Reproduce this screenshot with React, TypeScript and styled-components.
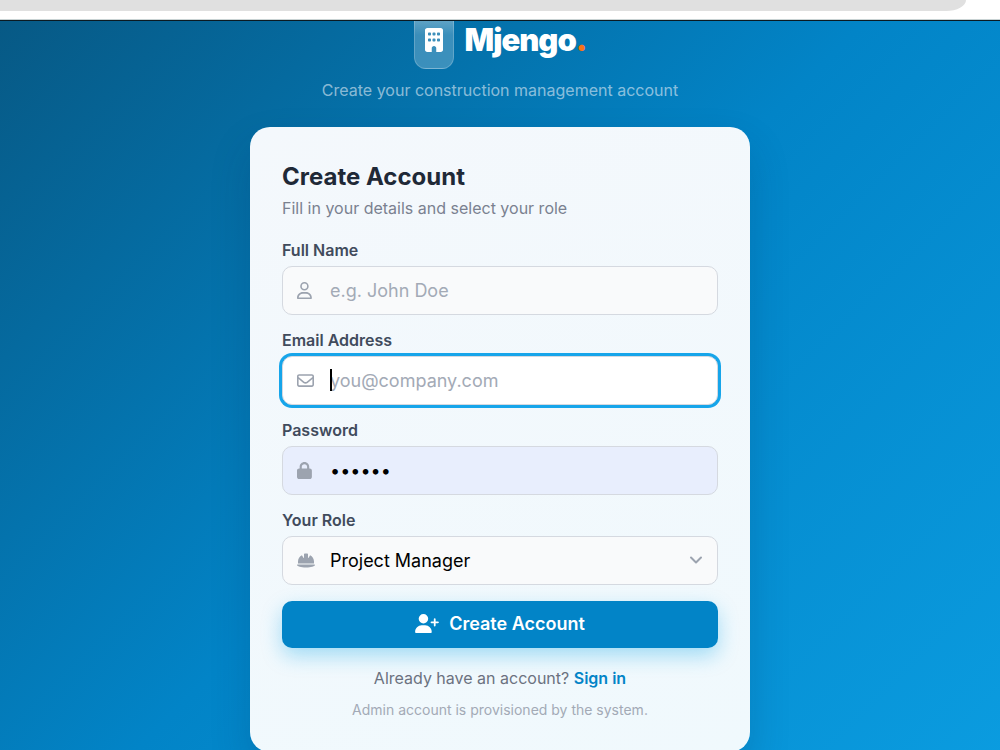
import React from "react";
import styled, { createGlobalStyle, css } from "styled-components";
import {
  FaBuilding,
  FaRegUser,
  FaRegEnvelope,
  FaLock,
  FaHelmetSafety,
  FaUserPlus,
} from "react-icons/fa6";

const GlobalStyle = createGlobalStyle`
  *, *::before, *::after { box-sizing: border-box; }
  body { margin: 0; font-family: Inter, "Liberation Sans", sans-serif; }
  h1, h2, p { margin: 0; }
`;

const Shell = styled.div`
  display: flex;
  flex-direction: column;
  height: 100vh;
  background: #ffffff;
`;

const BrowserBar = styled.div`
  flex: none;
  height: 21px;
  padding-right: 34px;
  border-bottom: 1px solid #0b1a22;
  box-shadow: inset 0 -1px 0 #c9d3d4;
`;

const AddressBar = styled.div`
  height: 11px;
  background: #e0e0e0;
  border-bottom-right-radius: 20px 11px;
`;

const Page = styled.main`
  flex: 1;
  min-height: 0;
  overflow: hidden auto;
  scrollbar-width: none;
  display: flex;
  flex-direction: column;
  align-items: center;
  background: linear-gradient(135deg, #075985 0%, #0284c7 50%, #0ea5e9 120%);
`;

const Brand = styled.header`
  display: flex;
  flex-direction: column;
  align-items: center;
  flex: none;
`;

const Logo = styled.div`
  display: flex;
  gap: 11px;
`;

const LogoTile = styled.div`
  width: 40px;
  height: 48px;
  padding-top: 7px;
  display: flex;
  justify-content: center;
  color: #ffffff;
  font-size: 24px;
  border: 1px solid rgba(255, 255, 255, 0.2);
  border-top: 0;
  border-radius: 0 0 12px 12px;
  background: linear-gradient(rgba(255, 255, 255, 0.36), rgba(255, 255, 255, 0.22) 14px);
`;

const BrandName = styled.h1`
  color: #ffffff;
  font-size: 31px;
  line-height: 38px;
  font-weight: 900;
  letter-spacing: -1px;
`;

const Dot = styled.span`
  color: #f97316;
`;

const Tagline = styled.p`
  margin-top: 9px;
  color: rgba(224, 236, 245, 0.62);
  font-size: 16px;
  line-height: 24px;
`;

const Card = styled.section`
  flex: none;
  width: 100%;
  max-width: 500px;
  margin-top: 25px;
  padding: 32px;
  border-radius: 20px;
  background: linear-gradient(160deg, #f4f8fc, #f0f9fd);
  box-shadow: 0 20px 40px rgba(0, 40, 80, 0.18);
`;

const Title = styled.h2`
  color: #1f2937;
  font-size: 24px;
  line-height: 36px;
  font-weight: 700;
`;

const Subtitle = styled.p`
  margin-top: 2px;
  color: #7a8190;
  font-size: 16px;
  line-height: 22px;
`;

const Form = styled.form`
  display: flex;
  flex-direction: column;
  gap: 16px;
  margin-top: 21px;
`;

const Field = styled.div`
  display: flex;
  flex-direction: column;
  gap: 6px;
`;

const Label = styled.label`
  color: #414b5c;
  font-size: 16px;
  line-height: 20px;
  font-weight: 600;
`;

const Control = styled.div`
  position: relative;
  display: grid;
`;

const FieldIcon = styled.span`
  position: absolute;
  left: 15px;
  top: 0;
  bottom: 0;
  display: flex;
  align-items: center;
  color: #9ca3af;
  pointer-events: none;

  svg {
    width: 18px;
    height: 17px;
  }
`;

const ChevronIcon = styled(FieldIcon)`
  left: auto;
  right: 15px;

  svg {
    width: 14px;
    height: 14px;
  }
`;

const Caret = styled.span`
  position: absolute;
  left: 48px;
  top: 13px;
  width: 2px;
  height: 22px;
  background: #000000;
  pointer-events: none;
`;

const fieldBox = css`
  width: 100%;
  height: 49px;
  margin-bottom: -1px;
  padding: 0 47px;
  border: 1px solid #d5d9e0;
  border-radius: 10px;
  background: #f9fafb;
  color: #000000;
  font-family: inherit;
  font-size: 18px;
  outline: none;
`;

const Input = styled.input<{ $state?: "active" | "filled" }>`
  ${fieldBox}
  caret-color: transparent;

  &::placeholder {
    color: #a3aab6;
    opacity: 1;
  }

  ${({ $state }) =>
    $state === "active" &&
    css`
      background: #ffffff;
      box-shadow: 0 0 0 3px #16a5ea;
    `}
  ${({ $state }) =>
    $state === "filled" &&
    css`
      background: #e8eefd;
    `}
`;

const Select = styled.select`
  ${fieldBox}
  appearance: none;
`;

const SubmitButton = styled.button`
  display: flex;
  align-items: center;
  justify-content: center;
  gap: 10px;
  height: 47px;
  padding: 0 0 2px;
  margin-top: 1px;
  border: 0;
  border-radius: 10px;
  background: #0284c7;
  color: #ffffff;
  font-family: inherit;
  font-size: 18px;
  font-weight: 600;
  box-shadow: 0 8px 20px rgba(14, 165, 233, 0.35);

  svg {
    width: 24px;
    height: 19px;
  }
`;

const SignInText = styled.p`
  margin-top: 18px;
  color: #6b7280;
  font-size: 16px;
  line-height: 24px;
  text-align: center;
`;

const SignInLink = styled.a`
  color: #0284c7;
  font-weight: 600;
  text-decoration: none;
`;

const Note = styled.p`
  margin-top: 10px;
  color: #a3aab6;
  font-size: 14px;
  line-height: 20px;
  text-align: center;
`;

const iconAlign = { preserveAspectRatio: "xMinYMid meet", "aria-hidden": true } as const;

export default function App() {
  return (
    <Shell>
      <GlobalStyle />
      <BrowserBar>
        <AddressBar />
      </BrowserBar>
      <Page>
        <Brand>
          <Logo>
            <LogoTile>
              <FaBuilding />
            </LogoTile>
            <BrandName>
              Mjengo<Dot>.</Dot>
            </BrandName>
          </Logo>
          <Tagline>Create your construction management account</Tagline>
        </Brand>
        <Card>
          <Title>Create Account</Title>
          <Subtitle>Fill in your details and select your role</Subtitle>
          <Form onSubmit={(e) => e.preventDefault()}>
            <Field>
              <Label htmlFor="name">Full Name</Label>
              <Control>
                <Input id="name" type="text" placeholder="e.g. John Doe" />
                <FieldIcon>
                  <FaRegUser {...iconAlign} />
                </FieldIcon>
              </Control>
            </Field>
            <Field>
              <Label htmlFor="email">Email Address</Label>
              <Control>
                <Input id="email" type="email" placeholder="you@company.com" $state="active" />
                <FieldIcon>
                  <FaRegEnvelope {...iconAlign} />
                </FieldIcon>
                <Caret />
              </Control>
            </Field>
            <Field>
              <Label htmlFor="password">Password</Label>
              <Control>
                <Input id="password" type="password" defaultValue="secret" $state="filled" />
                <FieldIcon>
                  <FaLock {...iconAlign} />
                </FieldIcon>
              </Control>
            </Field>
            <Field>
              <Label htmlFor="role">Your Role</Label>
              <Control>
                <Select id="role" defaultValue="pm">
                  <option value="pm">Project Manager</option>
                </Select>
                <FieldIcon>
                  <FaHelmetSafety {...iconAlign} />
                </FieldIcon>
                <ChevronIcon>
                  <svg viewBox="0 0 14 14" fill="none" aria-hidden="true">
                    <path
                      d="M2 4.5 L7 9.5 L12 4.5"
                      stroke="currentColor"
                      strokeWidth="2"
                      strokeLinecap="round"
                      strokeLinejoin="round"
                    />
                  </svg>
                </ChevronIcon>
              </Control>
            </Field>
            <SubmitButton type="submit">
              <FaUserPlus />
              Create Account
            </SubmitButton>
          </Form>
          <SignInText>
            Already have an account? <SignInLink href="#signin">Sign in</SignInLink>
          </SignInText>
          <Note>Admin account is provisioned by the system.</Note>
        </Card>
      </Page>
    </Shell>
  );
}
